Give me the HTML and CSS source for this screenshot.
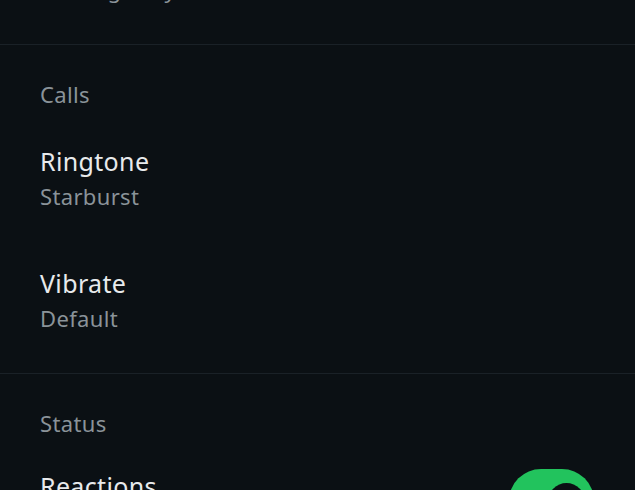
FILE: index.html
```html
<!DOCTYPE html>
<html lang="en">
<head>
<meta charset="utf-8">
<title>Notifications</title>
<link rel="stylesheet" href="styles.css">
</head>
<body>
<main class="screen">
  <section class="section section--scrolled">
    <div class="item">
      <div class="item__text">
        <div class="item__title">Use high priority notifications</div>
        <div class="item__sub">Messages by default</div>
      </div>
    </div>
  </section>
  <section class="section">
    <h2 class="section__header">Calls</h2>
    <div class="item">
      <div class="item__text">
        <div class="item__title">Ringtone</div>
        <div class="item__sub">Starburst</div>
      </div>
    </div>
    <div class="item">
      <div class="item__text">
        <div class="item__title">Vibrate</div>
        <div class="item__sub">Default</div>
      </div>
    </div>
  </section>
  <section class="section">
    <h2 class="section__header">Status</h2>
    <div class="item item--toggle">
      <div class="item__text">
        <div class="item__title">Reactions</div>
        <div class="item__sub">Show notifications when you get likes on a status</div>
      </div>
      <div class="switch switch--on" role="switch" aria-checked="true"><span class="switch__thumb"></span></div>
    </div>
  </section>
</main>
</body>
</html>
```

FILE: styles.css
```css
html, body {
  margin: 0;
  padding: 0;
  background: #0b1014;
  height: 490px;
  overflow: hidden;
}

body {
  font-family: "Noto Sans", "Open Sans", sans-serif;
  -webkit-font-smoothing: antialiased;
  letter-spacing: 0.35px;
}

.screen {
  display: flex;
  flex-direction: column;
  margin-top: -89px;
}

.section {
  display: flex;
  flex-direction: column;
  padding-bottom: 11px;
  border-bottom: 1px solid #1a2127;
}

.section__header {
  margin: 0;
  padding: 34px 40px 9px;
  font-size: 22px;
  line-height: 30px;
  font-weight: 400;
  color: #8a9399;
}

.item {
  display: flex;
  align-items: flex-start;
  justify-content: space-between;
  padding: 26px 41px 26px 40px;
  gap: 24px;
}

.item__text {
  display: flex;
  flex-direction: column;
  min-width: 0;
}

.item__title {
  font-size: 25px;
  line-height: 34px;
  color: #e8eaec;
}

.item__sub {
  font-size: 22px;
  line-height: 36px;
  color: #8a9399;
}

.item--toggle {
  padding-top: 22px;
}

.switch {
  flex: none;
  position: relative;
  width: 85px;
  height: 64px;
  border-radius: 32px;
  margin-top: 0;
}

.switch--on {
  background: #22c35d;
}

.switch__thumb {
  position: absolute;
  top: 14px;
  right: 9px;
  width: 37px;
  height: 37px;
  border-radius: 50%;
  background: #0b1014;
}
```
